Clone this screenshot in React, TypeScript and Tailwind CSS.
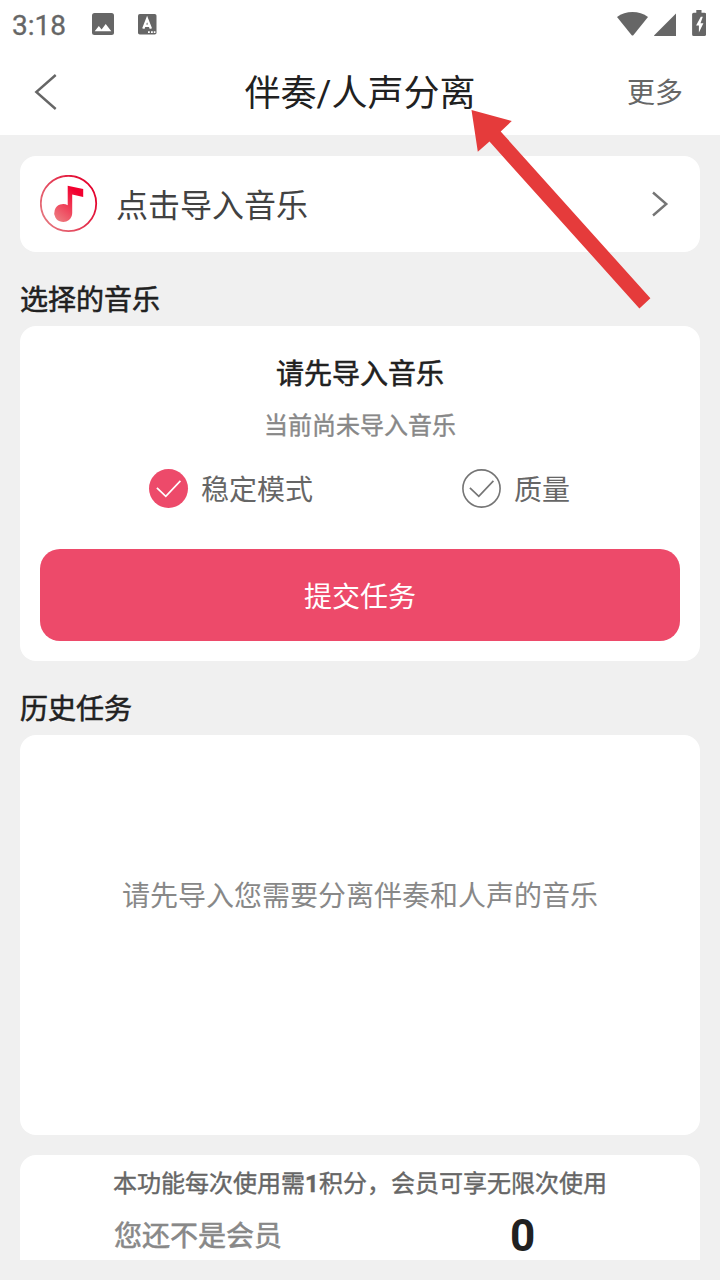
import clsx from "clsx";
import type { ReactNode } from "react";

const BackIcon = () => (
  <svg width="24" height="38" viewBox="0 0 24 38" fill="none">
    <path d="M21.7 2 2.3 19 21.7 36" stroke="#666" strokeWidth="2.4" />
  </svg>
);

const ForwardIcon = () => (
  <svg width="18" height="28" viewBox="0 0 18 28" fill="none">
    <path d="M2 2.5 15.3 14 2 25.5" stroke="#757575" strokeWidth="2.4" />
  </svg>
);

const PictureIcon = () => (
  <svg width="22" height="22" viewBox="0 0 22 22">
    <rect width="22" height="22" rx="2.5" fill="#666" />
    <path d="M2.7 18.3 6.8 13l2.8 3.4 4.1-5.4 5.6 7.3z" fill="#fff" />
  </svg>
);

const KeyboardIcon = () => (
  <svg width="19" height="21" viewBox="0 0 19 21">
    <rect width="18.5" height="20.5" rx="1.8" fill="#666" />
    <path
      d="M5.3 14.6 9.1 5l3.8 9.6M6.6 11.7h5"
      fill="none"
      stroke="#fff"
      strokeWidth="2.4"
    />
    <path d="M10 17.2h1.8v1.8H10zM13 17.2h1.8v1.8H13zM15.8 17.2h1.6v1.8h-1.6z" fill="#fff" />
  </svg>
);

const StatusIcons = () => (
  <svg width="90" height="28" viewBox="0 0 90 28" fill="#666">
    {/* wifi */}
    <path d="M1 9C9.5 2.2 23.5 2.2 32 9L17.3 27.2q-.8.8-1.6 0z" />
    {/* signal */}
    <path d="M38 27.5 60 5.5v22.5H38.4z" />
    {/* battery */}
    <path d="M80.3 2h5.2v2.7h3q1.6 0 1.6 1.6v20.1q0 1.6-1.6 1.6H77.7q-1.6 0-1.6-1.6V6.3q0-1.6 1.6-1.6h2.6z" />
    <path d="m84.8 8.7-4.7 8.8h2.8v7l4.5-9.3h-2.9l2.3-6.5z" fill="#fff" />
  </svg>
);

const MusicIcon = () => (
  <svg width="58" height="58" viewBox="0.5 0.5 58 58" fill="none">
    <defs>
      <linearGradient id="ring" x1="4" y1="44" x2="54" y2="14" gradientUnits="userSpaceOnUse">
        <stop stopColor="#e5737c" />
        <stop offset="1" stopColor="#e3002b" />
      </linearGradient>
      <linearGradient id="note" x1="16" y1="45" x2="38" y2="18" gradientUnits="userSpaceOnUse">
        <stop stopColor="#ed7c80" />
        <stop offset="1" stopColor="#f2002f" />
      </linearGradient>
    </defs>
    <circle cx="29" cy="29" r="27.7" stroke="url(#ring)" strokeWidth="1.8" />
    <path
      d="M28.2 11.2 43.7 14.6V22.6L32.7 20V38.5A9 9 0 1 1 28.2 30.7z"
      fill="url(#note)"
    />
  </svg>
);

const CheckCircle = ({ checked }: { checked: boolean }) => (
  <svg width="40" height="40" viewBox="0.5 0.5 40 40" fill="none">
    <circle
      cx="20"
      cy="20"
      r={checked ? 19.5 : 18.6}
      fill={checked ? "#ed4a6a" : "none"}
      stroke={checked ? "none" : "#757575"}
      strokeWidth="1.6"
    />
    <path
      d="m8.4 19.3 8.9 8.6 14.6-15.5"
      stroke={checked ? "#fff" : "#757575"}
      strokeWidth="1.7"
    />
  </svg>
);

const Option = ({ label, checked }: { label: string; checked: boolean }) => (
  <div className="flex h-10 items-center gap-3">
    <CheckCircle checked={checked} />
    <span className="pt-1 text-[28px] leading-10 text-[#666]">{label}</span>
  </div>
);

const SectionTitle = ({ children, className }: { children: ReactNode; className?: string }) => (
  <h2
    className={clsx(
      "text-[28px] leading-10 text-[#212121] [-webkit-text-stroke:0.55px_#212121]",
      className,
    )}
  >
    {children}
  </h2>
);

const Pointer = () => (
  <svg
    className="pointer-events-none absolute left-[470px] top-[108px]"
    width="184"
    height="204"
    viewBox="470 108 184 204"
  >
    <path
      d="M471.5 110 511.8 121 500.7 131.5 650.4 298.3 639.4 308.4 489.5 141.6 477.8 151.8z"
      fill="#e53b3b"
    />
  </svg>
);

const App = () => {
  return (
    <div className="relative flex h-[1280px] w-[720px] flex-col overflow-hidden bg-[#f0f0f0] font-['Roboto','Noto_Sans_CJK_SC',sans-serif]">
      {/* Status bar */}
      <div className="flex h-12 items-center bg-white pl-3 pr-3.5">
        <span className="w-[79.5px] pt-[3px] text-[28px] leading-8 text-[#666] [-webkit-text-stroke:0.3px_#666]">
          3:18
        </span>
        <PictureIcon />
        <div className="ml-6">
          <KeyboardIcon />
        </div>
        <div className="ml-auto pb-1">
          <StatusIcons />
        </div>
      </div>

      {/* Title bar */}
      <header className="grid h-[87px] grid-cols-[1fr_auto_1fr] items-center bg-white px-[34px] text-[#666]">
        <BackIcon />
        <h1 className="pt-1 text-4xl leading-[52px] text-[#212121]">伴奏/人声分离</h1>
        <span className="justify-self-end pr-[3px] pt-1 text-[28px] leading-10">更多</span>
      </header>

      <main className="flex flex-col px-5 pt-[21px]">
        <div className="flex h-24 items-center rounded-2xl bg-white pl-5 pr-[31px]">
          <MusicIcon />
          <span className="ml-[18px] pt-1 text-[32px] leading-12 text-[#424242]">点击导入音乐</span>
          <div className="ml-auto">
            <ForwardIcon />
          </div>
        </div>

        <SectionTitle className="mt-[29px]">选择的音乐</SectionTitle>
        <section className="mt-[5px] flex h-[335px] flex-col rounded-2xl bg-white px-5 pt-[29px]">
          <h3 className="text-center text-[28px] leading-10 text-[#212121] [-webkit-text-stroke:0.55px_#212121]">
            请先导入音乐
          </h3>
          <p className="mt-[13px] text-center text-2xl leading-9 text-[#888] [-webkit-text-stroke:0.4px_#888]">
            当前尚未导入音乐
          </p>
          <div className="mt-[25px] grid grid-cols-[313px_1fr] pl-[109px]">
            <Option label="稳定模式" checked />
            <Option label="质量" checked={false} />
          </div>
          <button className="mt-10 h-[92px] rounded-[20px] bg-[#ed4a6a] pt-[5px] text-[28px] text-white">
            提交任务
          </button>
        </section>

        <SectionTitle className="mt-[29px]">历史任务</SectionTitle>
        <section className="mt-[5px] flex h-[400px] justify-center rounded-2xl bg-white pt-[142px]">
          <p className="text-[28px] leading-10 text-[#888]">请先导入您需要分离伴奏和人声的音乐</p>
        </section>

        <section className="mt-5 h-[105px] rounded-t-2xl bg-white pt-[11px]">
          <p className="text-center text-2xl leading-9 text-[#666] [-webkit-text-stroke:0.4px_#666]">
            本功能每次使用需<b>1</b>积分，会员可享无限次使用
          </p>
          <div className="mt-[9px] flex h-[50px] items-center pl-[94px]">
            <span className="w-[396px] pt-0.5 text-[28px] leading-10 text-[#888] [-webkit-text-stroke:0.55px_#888]">
              您还不是会员
            </span>
            <span className="text-[44px] font-bold leading-[50px] text-[#212121]">0</span>
          </div>
        </section>
      </main>

      <Pointer />
    </div>
  );
};

export default App;
